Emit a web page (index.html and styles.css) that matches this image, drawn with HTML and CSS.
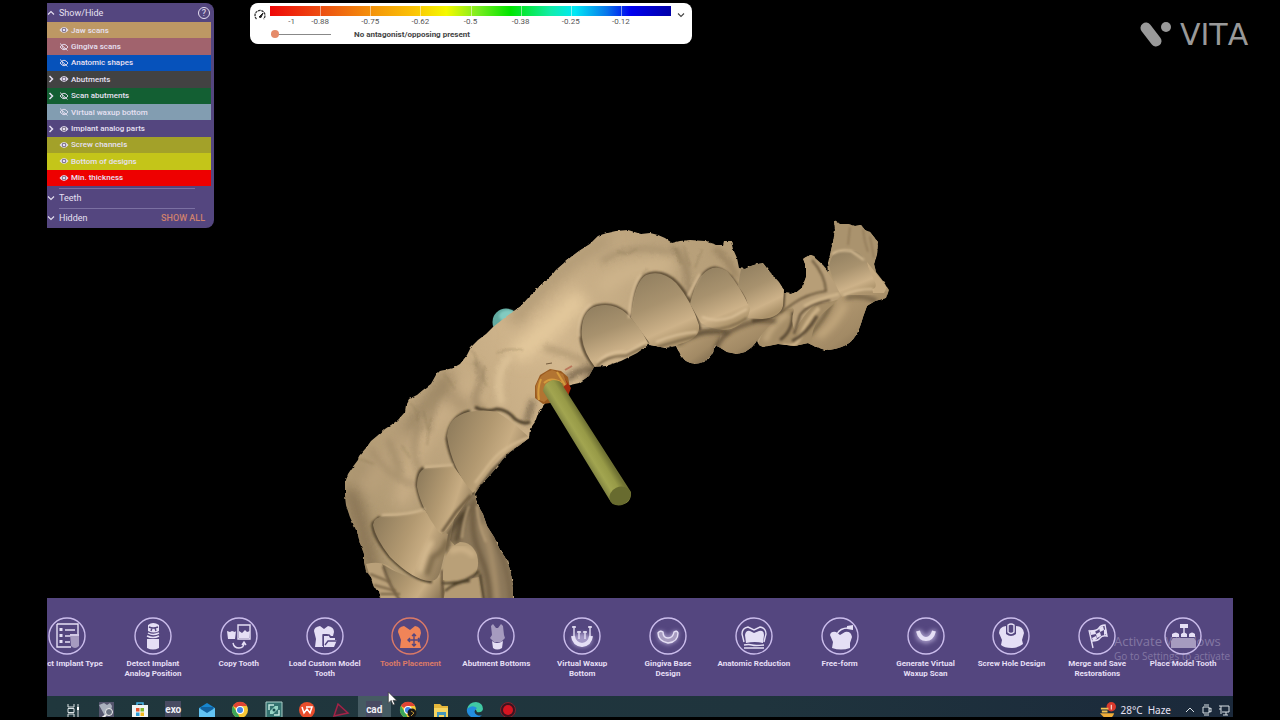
FILE: index.html
```html
<!DOCTYPE html>
<html lang="en">
<head>
  <meta charset="UTF-8" />
  <meta name="viewport" content="width=device-width, initial-scale=1.0" />
  <title>Tooth Placement</title>
  <link rel="stylesheet" href="styles.css">
</head>
<body>
  <!-- shared icons -->
  <svg class="sprite" aria-hidden="true">
    <symbol id="eye" viewBox="0 0 20 16">
      <path d="M1 8Q10-4 19 8Q10 20 1 8Z" fill="currentColor"/>
      <circle cx="10" cy="8" r="4.6" fill="#766b84"/>
      <circle cx="10" cy="8" r="2.6" fill="currentColor"/>
    </symbol>
    <symbol id="eye-off" viewBox="0 0 20 16">
      <path d="M2 8Q10-3 18 8Q10 19 2 8Z" fill="none" stroke="currentColor" stroke-width="1.8"/>
      <path d="M7 6a4 4 0 0 0 6 5M2 1l15 14" fill="none" stroke="currentColor" stroke-width="1.8"/>
    </symbol>
    <symbol id="right" viewBox="0 0 8 8"><path d="M2.5 1l3 3-3 3" fill="none" stroke="currentColor" stroke-width="1.5"/></symbol>
    <symbol id="down" viewBox="0 0 8 8"><path d="M1 2.5l3 3 3-3" fill="none" stroke="currentColor" stroke-width="1.1"/></symbol>
    <symbol id="up" viewBox="0 0 8 8"><path d="M1 5.5l3-3 3 3" fill="none" stroke="currentColor" stroke-width="1.1"/></symbol>
  </svg>

  <div class="screen">
    <main class="viewport">
      <!-- jaw scan -->
      <svg class="model" viewBox="47 3 1186 595" role="img" aria-label="Jaw scan">
        <defs>
          <linearGradient id="jawFill" x1="345" y1="560" x2="890" y2="250" gradientUnits="userSpaceOnUse">
            <stop offset="0" stop-color="#ab956f"/>
            <stop offset=".25" stop-color="#bfa67f"/>
            <stop offset=".45" stop-color="#d2b78e"/>
            <stop offset=".7" stop-color="#b9a17b"/>
            <stop offset="1" stop-color="#ad956d"/>
          </linearGradient>
          <linearGradient id="tooth" x1=".1" y1="0" x2=".5" y2="1">
            <stop offset="0" stop-color="#907e5f"/>
            <stop offset=".45" stop-color="#a8926e"/>
            <stop offset=".8" stop-color="#cdb289"/>
            <stop offset="1" stop-color="#ab926a"/>
          </linearGradient>
          <linearGradient id="toothLeft" x1="0" y1=".2" x2="1" y2=".6">
            <stop offset="0" stop-color="#8f7c5c"/>
            <stop offset=".45" stop-color="#b29971"/>
            <stop offset=".7" stop-color="#c8ad83"/>
            <stop offset="1" stop-color="#907b5a"/>
          </linearGradient>
          <linearGradient id="back" x1="0" y1="0" x2="1" y2="1">
            <stop offset="0" stop-color="#bfa47b"/>
            <stop offset=".6" stop-color="#a28a65"/>
            <stop offset="1" stop-color="#6a593f"/>
          </linearGradient>
          <linearGradient id="rod" x1="578" y1="450" x2="596" y2="439" gradientUnits="userSpaceOnUse">
            <stop offset="0" stop-color="#7d8040"/>
            <stop offset=".35" stop-color="#a2a550"/>
            <stop offset=".7" stop-color="#979a47"/>
            <stop offset="1" stop-color="#707233"/>
          </linearGradient>
          <filter id="soft1"><feGaussianBlur stdDeviation="1"/></filter>
          <filter id="soft2" x="-30%" y="-30%" width="160%" height="160%"><feGaussianBlur stdDeviation="2"/></filter>
          <filter id="soft3" x="-30%" y="-30%" width="160%" height="160%"><feGaussianBlur stdDeviation="3"/></filter>
          <filter id="soft7" x="-40%" y="-40%" width="180%" height="180%"><feGaussianBlur stdDeviation="7"/></filter>
          <filter id="rough" x="-5%" y="-5%" width="110%" height="110%">
            <feTurbulence type="fractalNoise" baseFrequency=".2" numOctaves="2" seed="4"/>
            <feDisplacementMap in="SourceGraphic" scale="3" xChannelSelector="R" yChannelSelector="G"/>
          </filter>
          <path id="jaw" d="M381 598L379 591 374 587 371 577 366 571 364 562 364 554 360 543 357 532 350 517 346 505 345 495 345 483 348 474 352 468 358 460 359 456 366 448 371 441 377 436 385 429 391 425 398 420 405 412 406 405 409 399 417 395 423 390 431 384 436 375 440 371 445 370 453 368 460 364 467 355 471 347 478 340 486 334 493 327 507 316 521 306 530 296 541 285 552 275 556 270 571 257 579 251 590 244 598 236 607 233 616 231 628 230 641 234 650 233 658 235 665 238 672 243 680 241 690 240 705 241 710 243 717 245 723 245 724 241 731 241 733 249 737 258 739 268 745 269 751 266 757 264 763 263 770 272 779 282 784 290 784 293 791 294 797 292 803 287 806 277 806 266 803 259 809 255 814 257 823 265 829 272 828 263 833 242 835 230 834 221 840 224 848 224 855 226 861 225 865 230 870 232 874 237 878 242 877 255 874 264 876 272 883 281 889 290 886 298 875 301 867 306 863 317Q857 340 846 345 836 350 825 350L814 346 808 343 795 346 778 344 763 347 759 345 757 341 752 347 745 352 737 354 727 352 719 347 715 345Q713 357 703 362 694 366 686 361 681 357 676 346L665 348 655 346 648 345 637 353 621 361 606 366 594 367 589 376 579 383 570 385 559 389 547 401 539 411 535 422 530 429 529 438 520 445 510 452 503 459 497 467 490 475 480 486 475 494 477 504 483 514 487 526 494 537 500 550 507 560 511 573 513 585 513 602H381Z"/>
          <clipPath id="jawClip"><use href="#jaw"/></clipPath>
        </defs>

        <circle cx="506" cy="322" r="13.500" fill="#62aaa0"/>
        <ellipse cx="508" cy="316" rx="9" ry="6" fill="#82cbc0" filter="url(#soft1)"/>

        <g filter="url(#rough)">
        <use href="#jaw" fill="url(#jawFill)"/>
        <g clip-path="url(#jawClip)">
          <!-- broad gum shading -->
          <g fill="none" filter="url(#soft7)">
            <path d="M377 600Q367 535 349 487" stroke="#806c4e" stroke-width="13"/>
            <path d="M358 478Q415 430 449 372" stroke="#958160" stroke-width="13"/>
            <path d="M512 322Q560 262 610 238" stroke="#b19a75" stroke-width="15"/>
            <path d="M401 505Q420 420 475 382" stroke="#ccb189" stroke-width="13"/>
            <path d="M515 356Q550 330 582 296" stroke="#e4c99c" stroke-width="20"/>
            <path d="M600 290Q625 265 674 265" stroke="#cfb58c" stroke-width="16"/>
            <path d="M365 490Q380 460 412 435" stroke="#b9a07a" stroke-width="20"/>
            <path d="M440 370L454 400 470 409" stroke="#a18a66" stroke-width="10"/>
          </g>
          <g fill="none" filter="url(#soft3)">
            <path d="M601 262Q630 242 670 252" stroke="#a38d6a" stroke-width="4"/>
            <path d="M672 247Q690 258 688 296" stroke="#95805e" stroke-width="5"/>
            <path d="M714 248Q728 258 737 278" stroke="#937d5b" stroke-width="5"/>
            <path d="M474 362Q486 372 478 389T485 410" stroke="#9b8563" stroke-width="5"/>
            <path d="M510 355Q493 375 502 404" stroke="#e4ca9f" stroke-width="5"/>
            <path d="M370 448Q390 480 414 484" stroke="#a38c69" stroke-width="4"/>
            <path d="M420 423Q408 452 422 476M448 381Q427 405 430 432M388 439L401 474" stroke="#9f8966" stroke-width="4"/>
            <path d="M544 348Q568 352 592 366" stroke="#ae9671" stroke-width="5"/>
            <path d="M566 380Q580 367 596 369L584 385" stroke="#5d4e39" stroke-width="5"/>
            <path d="M533 400L526 424" stroke="#5d4e39" stroke-width="4"/>
          </g>
          <g fill="none" stroke="#84724f" stroke-width="1" opacity=".6" filter="url(#soft1)">
            <path d="M471 350Q478 356 476 367M485 367Q480 379 487 386M497 353Q505 348 523 350M410 403Q420 412 417 421M360 459L374 464M444 374L455 389M617 251L627 254 637 249M640 276L648 269M675 247L681 264M684 247L690 266M702 249L695 268M424 412L428 430M431 418L427 445M402 446L410 458"/>
          </g>
        </g>
        </g>

        <g clip-path="url(#jawClip)">
          <!-- inner side below the left teeth -->
          <path d="M474 492L481 510 496 538 510 566 515 602H475L468 560 450 540 455 515Z" fill="#8c785a"/>
          <g fill="none" filter="url(#soft2)">
            <path d="M474 500Q469 530 480 555T490 602" stroke="#6a583e" stroke-width="4"/>
            <path d="M482 524Q493 550 497 600" stroke="#a58d69" stroke-width="6"/>
            <path d="M492 535Q509 563 511 602" stroke="#786548" stroke-width="4"/>
            <path d="M468 506Q461 522 456 542M463 512L449 534 446 552" stroke="#4d3f2b" stroke-width="4"/>
          </g>
          <path d="M469 506Q463 522 462 538M477 506Q478 524 486 542" fill="none" stroke="#b69d77" stroke-width="2" filter="url(#soft1)"/>

          <!-- far teeth on the right -->
          <path d="M834 218L829 262Q845 242 875 274L882 240 865 222Z" fill="#aa936e"/>
          <path d="M863 229Q864 241 868 252M850 227L848 245M870 236L874 258" fill="none" stroke="#80694a" stroke-width="1" filter="url(#soft1)"/>
          <path d="M842 295Q857 287 877 290L891 292 886 299 868 305 860 329Q848 352 825 352 812 347 806 343Q814 331 829 308Z" fill="url(#back)"/>
          <path d="M845 304Q835 325 818 337" fill="none" stroke="#c2a77d" stroke-width="7" filter="url(#soft3)"/>
          <path d="M832 302Q824 320 808 336" fill="none" stroke="#58482f" stroke-width="3" filter="url(#soft2)"/>
          <path d="M846 298Q860 294 877 301" fill="none" stroke="#5d4d36" stroke-width="3" filter="url(#soft2)"/>
          <path d="M784 310Q760 328 757 350L812 348Q809 334 820 316L838 300Z" fill="#a58d67"/>
          <path d="M819 308Q807 320 801 335T783 345" fill="none" stroke="#cbb086" stroke-width="4" filter="url(#soft1)"/>
          <path d="M765 341Q772 324 788 314" fill="none" stroke="#bea47b" stroke-width="6" filter="url(#soft2)"/>
          <path d="M793 312Q793 331 780 340M817 316Q807 334 792 341" fill="none" stroke="#5b4b34" stroke-width="3" filter="url(#soft1)"/>
          <path d="M784 293Q800 291 806 275L803 257Q815 256 824 268 834 280 842 295 836 303 820 303 807 308 795 331 790 322 794 310 785 308Z" fill="#b89f79"/>
          <path d="M804 257Q814 263 820 273L825 290Q806 292 783 310L784 292Q800 291 806 275Z" fill="#b79e77"/>
          <path d="M812 260Q825 275 826 291 807 294 794 303L780 313" fill="none" stroke="#6d5a3e" stroke-width="2" filter="url(#soft1)"/>
          <path d="M830 300Q808 304 800 315L794 334" fill="none" stroke="#5d4c34" stroke-width="2" filter="url(#soft1)"/>
          <path d="M839 294Q816 299 804 306" fill="none" stroke="#cfb58b" stroke-width="3" filter="url(#soft1)"/>
          <path d="M867 262L887 287 884 293 873 293Z" fill="#c5aa81"/>
          <path d="M829 266Q832 251 841 251 857 247 864 258L875 282Q878 289 870 290 855 291 842 297 832 280 829 266Z" fill="url(#tooth)"/>
          <path d="M832 254Q840 249 851 251L864 260M843 295Q856 289 873 289" fill="none" stroke="#dac097" stroke-width="2" filter="url(#soft1)"/>

          <!-- cusps under the front teeth -->
          <path d="M676 346Q686 337 700 329H722L716 354Q699 372 680 358Z" fill="url(#back)"/>
          <path d="M718 331L752 319 776 319Q762 332 755 345 737 363 715 349L722 336Z" fill="url(#back)"/>
          <path d="M677 344Q698 328 728 332" fill="none" stroke="#4d3f2b" stroke-width="4" filter="url(#soft2)"/>
          <path d="M716 350Q720 330 757 321L776 321" fill="none" stroke="#4f402c" stroke-width="3" filter="url(#soft2)"/>

          <!-- front teeth -->
          <g fill="none" stroke="#54452f" stroke-width="3" filter="url(#soft1)">
            <path d="M595 367Q580 350 581 331 584 310 597 306 613 302 626 313T649 343"/>
            <path d="M633 316Q634 279 649 274 665 270 678 284T700 330"/>
            <path d="M692 301Q700 269 715 268 727 270 735 283T750 308"/>
            <path d="M784 289L783 306Q778 319 752 321"/>
          </g>
          <path d="M741 269Q753 263 763 264L784 289 783 306Q780 318 761 319L748 318Q751 300 738 286Z" fill="url(#tooth)"/>
          <path d="M690 304Q694 286 701 276 713 262 727 271 740 286 750 308 749 322 731 329 716 332 701 323Z" fill="url(#tooth)"/>
          <path d="M631 318Q634 282 646 275 661 269 676 283 692 302 699 325 701 338 680 344 666 350 651 345Z" fill="url(#tooth)"/>
          <path d="M582 337Q580 310 597 306 613 302 626 313 639 325 648 343 640 352 620 356 606 359 595 367 584 353 582 337Z" fill="url(#tooth)"/>
          <g fill="none" stroke="#dbc199" stroke-width="2" filter="url(#soft1)">
            <path d="M597 363Q608 350 627 352L646 342M656 342Q677 333 697 332M702 317Q716 323 732 317L747 309"/>
            <path d="M579 337Q577 312 591 304M629 318Q631 288 641 274M688 296L700 274"/>
          </g>
          <path d="M597 366Q608 355 626 356L646 346M657 347Q677 341 697 336M709 330Q731 329 747 318" fill="none" stroke="#7b6748" stroke-width="2" filter="url(#soft1)"/>

          <!-- left teeth -->
          <path d="M366 564Q383 560 393 569L436 602H378Z" fill="#b9a079"/>
          <path d="M382 564Q400 576 430 583L442 576 446 602H402Q390 586 382 564Z" fill="url(#toothLeft)"/>
          <path d="M383 566Q389 586 401 602M442 570L443 602" fill="none" stroke="#5d4c34" stroke-width="2" filter="url(#soft1)"/>
          <path d="M370 574L390 582M374 585L396 591M380 594H400" fill="none" stroke="#776345" stroke-width="2" filter="url(#soft1)"/>
          <path d="M445 592Q452 580 479 577L484 602H443Z" fill="#b39a73"/>
          <path d="M443 573Q444 549 460 542 472 542 477 555 481 571 470 579 457 584 443 580Z" fill="#b9a078"/>
          <path d="M450 552Q463 544 474 556" fill="none" stroke="#cdb288" stroke-width="5" filter="url(#soft2)"/>
          <path d="M442 583Q465 585 479 571M445 591Q455 582 470 581M480 574L484 602" fill="none" stroke="#4a3c28" stroke-width="2" filter="url(#soft1)"/>

          <g fill="none" stroke="#4d3f2a" stroke-width="3" filter="url(#soft1)">
            <path d="M474 494Q451 466 447 439 450 416 470 411"/>
            <path d="M441 534Q421 510 417 485 418 470 424 468"/>
            <path d="M432 582Q413 580 390 557 371 534 373 523L380 517"/>
            <path d="M475 407Q485 413 497 409 508 410 515 419 524 425 530 422"/>
          </g>
          <path d="M373 525Q373 517 385 516 410 516 425 510L440 531 448 534 445 552 441 569Q438 582 430 581 413 580 390 557 376 539 373 525Z" fill="url(#toothLeft)"/>
          <path d="M432 541Q424 553 420 572" fill="none" stroke="#d6bb91" stroke-width="5" filter="url(#soft2)"/>
          <path d="M447 540Q444 552 433 557L427 575" fill="none" stroke="#7d694a" stroke-width="5" filter="url(#soft2)"/>
          <path d="M417 487Q417 467 430 468L453 466 473 492 463 507 448 528Q442 537 438 531 421 508 417 487Z" fill="url(#toothLeft)"/>
          <path d="M447 436Q448 417 468 412 484 409 497 412 513 422 530 438L508 453Q493 462 487 474L473 493Q452 470 447 436Z" fill="url(#toothLeft)"/>
          <g fill="none" filter="url(#soft1)">
            <path d="M530 437Q502 447 491 462L475 483" stroke="#d6bb91" stroke-width="2"/>
            <path d="M529 441L507 456 493 470 477 491" stroke="#5f4f38" stroke-width="3"/>
            <path d="M471 495L456 512 442 532" stroke="#6e5b3f" stroke-width="3"/>
            <path d="M424 467L453 465M382 515Q410 515 425 509" stroke="#d2b88f" stroke-width="2"/>
          </g>
        </g>

        <!-- implant position and screw channel -->
        <path d="M540 375L550 369 561 371 568 377 570 388 565 401 543 404 535 398 535 386Z" fill="#9a5b20"/>
        <path d="M565 379L571 388 568 396 560 391Z" fill="#a52d0d"/>
        <path d="M536 386Q540 373 552 370L563 374 567 384 558 391 544 402 537 399Z" fill="#b27432"/>
        <path d="M541 379Q537 389 539 400M557 372L565 385M544 383Q551 376 562 383" fill="none" stroke="#d59b3d" stroke-width="2"/>
        <path d="M543 391Q544 382 553 380 562 380 563 386L631 492Q632 504 619 505 612 505 609 499Z" fill="url(#rod)"/>
        <ellipse cx="620" cy="496" rx="11" ry="9" transform="rotate(-25 620 496)" fill="#686b2f"/>
        <path d="M546 364L552 363" stroke="#745b3e"/>
        <path d="M565 370L572 366" stroke="#ba765b" stroke-width="2"/>
      </svg>

      <section class="panel">
        <div class="panel-head">
          <button class="group-button"><svg class="chevron"><use href="#up"/></svg>Show/Hide</button>
          <button class="help-button" aria-label="Help">?</button>
        </div>
        <ul class="layers">
          <li><button class="layer jaw"><i></i><svg class="eye"><use href="#eye"/></svg>Jaw scans</button></li>
          <li><button class="layer gingiva"><i></i><svg class="eye"><use href="#eye-off"/></svg>Gingiva scans</button></li>
          <li><button class="layer anatomic"><i></i><svg class="eye"><use href="#eye-off"/></svg>Anatomic shapes</button></li>
          <li><button class="layer abutments"><svg class="chevron"><use href="#right"/></svg><svg class="eye"><use href="#eye"/></svg>Abutments</button></li>
          <li><button class="layer scan"><svg class="chevron"><use href="#right"/></svg><svg class="eye"><use href="#eye-off"/></svg>Scan abutments</button></li>
          <li><button class="layer waxup"><i></i><svg class="eye"><use href="#eye-off"/></svg>Virtual waxup bottom</button></li>
          <li><button class="layer implant"><svg class="chevron"><use href="#right"/></svg><svg class="eye"><use href="#eye"/></svg>Implant analog parts</button></li>
          <li><button class="layer screw"><i></i><svg class="eye"><use href="#eye"/></svg>Screw channels</button></li>
          <li><button class="layer bottom"><i></i><svg class="eye"><use href="#eye"/></svg>Bottom of designs</button></li>
          <li><button class="layer thickness"><i></i><svg class="eye"><use href="#eye"/></svg>Min. thickness</button></li>
        </ul>
        <div class="panel-group">
          <button class="group-button"><svg class="chevron"><use href="#down"/></svg>Teeth</button>
        </div>
        <div class="panel-group">
          <button class="group-button"><svg class="chevron"><use href="#down"/></svg>Hidden</button>
          <button class="show-all">SHOW ALL</button>
        </div>
      </section>

      <section class="legend">
        <svg class="gauge" viewBox="0 0 12 12"><path d="M2.500 10A5 5 0 1 1 9.500 10" fill="none" stroke="#333" stroke-width="1.300" stroke-dasharray="2.500 .7"/><path d="M5 8L9 4 7 8.500Z" fill="#222" stroke="#222"/></svg>
        <div class="scale">
          <div class="scale-bar"><i></i><i></i><i></i><i></i><i></i><i></i><i></i><i></i></div>
          <div class="scale-labels">
            <span>-1</span><span>-0.88</span><span>-0.75</span><span>-0.62</span><span>-0.5</span><span>-0.38</span><span>-0.25</span><span>-0.12</span>
          </div>
          <div class="scale-foot">
            <input type="range" min="0" max="100" value="0" aria-label="Distance">
            <span>No antagonist/opposing present</span>
          </div>
        </div>
        <button class="legend-toggle" aria-label="Expand"><svg class="chevron"><use href="#down"/></svg></button>
      </section>
    </main>

    <nav class="toolbar">
      <div class="watermark"><p>Activate Windows</p><p>Go to Settings to activate Windows.</p></div>
      <div class="steps">
        <button class="step">
          <svg viewBox="0 0 38 38"><circle cx="19" cy="19" r="18"/><path d="M9 7h21v20M23 30H9V7M17 13h10M17 19h7M17 25h5" /><path class="solid" d="M11.500 11h3v3h-3zM11.500 17h3v3h-3zM11.500 23h3v3h-3z"/><path class="dim" d="M22 17h9v12q-4 4-8 0z"/><path d="M22 18h9"/></svg>
          <span>Select Implant Type</span>
        </button>
        <button class="step">
          <svg viewBox="0 0 38 38"><circle cx="19" cy="19" r="18"/><path class="solid" d="M13 22h12v9q-6 3-12 0zM14 8q5-4 11 0v6q-5 3-11 0z"/><path d="M14 16q5 3 11 0M13 19q6 3 12 0"/><path class="cut" d="M15 10q4 2 9 0M17 14l1-3h3l1 3"/></svg>
          <span>Detect Implant<br>Analog Position</span>
        </button>
        <button class="step">
          <svg viewBox="0 0 38 38"><circle cx="19" cy="19" r="18"/><path d="M18 8h12v14H18z"/><path class="solid" d="M7 14l3 1 2-1 3 1 1-1-1 8H8zM19 14l3 2 3-3 2 2 3-1-1 7H19z"/><path d="M13 26q1 5 6 5 5 0 5-5M22 28l2-3 2 3"/></svg>
          <span>Copy Tooth</span>
        </button>
        <button class="step">
          <svg viewBox="0 0 38 38"><circle cx="19" cy="19" r="18"/><path class="solid" d="M8 14q0-4 6-5l4 3 4-3q6 1 6 6l-1 4h-4l-2-2h-4v13H9l1-8z"/><path class="solid" d="M18 19h5l1 2h5v2h2l-3 7H18z"/><path class="cut" d="M17 29V18h6l2 2M19 28l3-4h9"/></svg>
          <span>Load Custom Model<br>Tooth</span>
        </button>
        <button class="step active">
          <svg viewBox="0 0 38 38"><circle cx="19" cy="19" r="18"/><path class="solid" d="M7 15q0-5 6-6l6 4 5-4q6 1 6 7l-2 7 2 8H9l1-8z"/><path class="cut" d="M23 17v12M17 23h12M21 19l2-2 2 2M21 27l2 2 2-2M19 21l-2 2 2 2M27 21l2 2-2 2"/></svg>
          <span>Tooth Placement</span>
        </button>
        <button class="step">
          <svg viewBox="0 0 38 38"><circle cx="19" cy="19" r="18"/><path class="dim" d="M14 9l2-2 3 4h2l3-4 2 2 1 9 1 3-4 4h-7l-4-4 2-3z"/><path class="solid" d="M15 24q2 2 5 2t6-2l-1 7q-5 3-9 0z"/></svg>
          <span>Abutment Bottoms</span>
        </button>
        <button class="step">
          <svg viewBox="0 0 38 38"><circle cx="19" cy="19" r="18"/><ellipse class="glow" cx="19" cy="23" rx="10" ry="7"/><path class="thick" d="M10 19q1 8 9 9 8-1 9-9"/><path d="M11 9v13M16 14v8M22 14v8M27 9v13M9 10h4M14 15h4M20 15h4M25 10h4"/></svg>
          <span>Virtual Waxup<br>Bottom</span>
        </button>
        <button class="step">
          <svg viewBox="0 0 38 38"><circle cx="19" cy="19" r="18"/><path class="glow" d="M8 14h6l5 6 5-6h6l-2 10-9 4-9-4z"/><path class="dim" d="M9 16q2-3 5-1 0 6 5 6t6-6q3-2 4 1 0 9-10 10Q9 24 9 16Z"/><path d="M9 16q2-3 5-1 0 6 5 6t6-6q3-2 4 1 0 9-10 10Q9 24 9 16Z"/></svg>
          <span>Gingiva Base<br>Design</span>
        </button>
        <button class="step">
          <svg viewBox="0 0 38 38"><circle cx="19" cy="19" r="18"/><path class="solid" d="M10 18q1-5 5-4l4 2 5-2q5-1 5 4l-1 8q-8-2-17 0z"/><path d="M9 25l-2-8q0-6 6-7l6 3 6-3q6 1 6 7l-2 8M9 28q5-1 8 0t12 0M9 31h20"/></svg>
          <span>Anatomic Reduction</span>
        </button>
        <button class="step">
          <svg viewBox="0 0 38 38"><circle cx="19" cy="19" r="18"/><path class="solid" d="M9 18q1-4 6-3l4 3 5-3q6-1 7 5l-2 6v5q-9 3-18 0l1-6z"/><path d="M16 17q3-6 11-6"/><path class="solid" d="M26 9l6-1v5l-6-1z"/></svg>
          <span>Free-form</span>
        </button>
        <button class="step">
          <svg viewBox="0 0 38 38"><circle cx="19" cy="19" r="18"/><path class="glow" d="M8 13h6l5 6 5-6h6l-2 10-9 4-9-4z"/><path class="thick" d="M11 14q2 8 8 8t8-8"/></svg>
          <span>Generate Virtual<br>Waxup Scan</span>
        </button>
        <button class="step">
          <svg viewBox="0 0 38 38"><circle cx="19" cy="19" r="18"/><path class="solid" d="M7 16q0-6 7-7v8q5 4 10 0V9q7 0 8 7l-2 7 1 4q-5 4-11 4-8 0-11-3l1-5z"/><path d="M16 8v7q3 3 6 0V8q-3-2-6 0Z"/></svg>
          <span>Screw Hole Design</span>
        </button>
        <button class="step">
          <svg viewBox="0 0 38 38"><circle cx="19" cy="19" r="18"/><path d="M11 13l4 18M12 14q7 0 9-3t6-3l2 11q-5-1-7 2t-8 3"/><path class="solid" d="M12 14l5-1 1 4-5 1zM21 11l4-2 1 4-4 2zM18 17l4-2 1 4-4 2zM26 13l2-1 1 5-3 1zM14 21l4-2 1 3-4 2z"/></svg>
          <span>Merge and Save<br>Restorations</span>
        </button>
        <button class="step">
          <svg viewBox="0 0 38 38"><circle cx="19" cy="19" r="18"/><path class="solid" d="M16 7h8v4h-8zM8 17q4-3 7 0v3H8zM17 17q3-3 6 0v3h-6zM25 17q3-3 6 0v3h-6z"/><path d="M20 11v5"/><path class="dim" d="M9 21h21l2 3v7H7v-7z"/></svg>
          <span>Place Model Tooth</span>
        </button>
      </div>
      <svg class="cursor" viewBox="0 0 12 16"><path d="M1 1v12l3-3 2 5 2-1-2-4h4Z" fill="#fff" stroke="#333" stroke-width=".7"/></svg>
    </nav>

    <footer class="taskbar">
      <div class="apps">
        <button aria-label="Task view"><svg viewBox="0 0 18 18"><path d="M4 3v3h6V3M4 16v-3h6v3M4 7.500h6v4H4zM14 3v13" fill="none" stroke="#dce3e5"/><path d="M13 6h2v3h-2z" fill="#fff"/></svg></button>
        <button aria-label="Scan viewer"><svg viewBox="0 0 18 18"><path d="M2 1h15v16H2z" fill="#54556d"/><path d="M2 4l5-2 3 2 3-2 2 3-2 9-5 1z" fill="#aab1bd"/><circle cx="12" cy="11" r="3.500" fill="#697180" stroke="#eee"/><path d="M9 14l-4 3" stroke="#eee" stroke-width="2"/></svg></button>
        <button aria-label="Store"><svg viewBox="0 0 18 18"><path d="M6 5V2h6v3" fill="none" stroke="#48b6e8" stroke-width="1.500"/><path d="M1 4h16v14H1z" fill="#f1f5f5"/><path d="M5 7h3.500v3.500H5z" fill="#e6532d"/><path d="M9.500 7H13v3.500H9.500z" fill="#7fb52b"/><path d="M5 11.500h3.500V15H5z" fill="#2d9fd9"/><path d="M9.500 11.500H13V15H9.500z" fill="#f4b91d"/></svg></button>
        <button class="text-app">exo</button>
        <button aria-label="Mail"><svg viewBox="0 0 18 18"><path d="M1 7l8-5 8 5v10H1z" fill="#1786cf"/><path d="M3 6h12v6H3z" fill="#12629f"/><path d="M1 7l8 5 8-5v10H1z" fill="#63c3f2"/></svg></button>
        <button aria-label="Chrome"><svg viewBox="0 0 18 18"><circle cx="9" cy="9" r="8" fill="#f6c736"/><path d="M9 9L2 5a8 8 0 0 1 14 0H9Z" fill="#e04435"/><path d="M2 5l5 8 2 4A8 8 0 0 1 2 5Z" fill="#3ca65a"/><circle cx="9" cy="9" r="4" fill="#fff"/><circle cx="9" cy="9" r="3" fill="#4084e6"/></svg></button>
        <button aria-label="Sync"><svg viewBox="0 0 18 18"><path d="M1 1h16v16H1z" fill="#33716f" stroke="#a9cdc7"/><path d="M4 9V4h5M14 9v5H9" fill="none" stroke="#c3e8df" stroke-width="1.500"/><path d="M5 10l5-5h3v3l-5 5H5z" fill="#95d4c4"/><circle cx="9" cy="9" r="1.500" fill="#1b4d50"/></svg></button>
        <button aria-label="WPS Office"><svg viewBox="0 0 18 18"><circle cx="9" cy="9" r="8" fill="#e94d2c"/><path d="M4 6l2 6 3-4 3 4 2-6H8" fill="none" stroke="#fff" stroke-width="1.500"/></svg></button>
        <button aria-label="Media player"><svg viewBox="0 0 18 18"><path d="M6 3l10 9-14 3Z" fill="#3b2939" stroke="#a42347" stroke-width="1.500"/></svg></button>
        <button class="text-app current">cad</button>
        <button aria-label="Chrome profile"><svg viewBox="0 0 18 18"><circle cx="9" cy="9" r="8" fill="#f6c736"/><path d="M9 9L2 5a8 8 0 0 1 14 0H9Z" fill="#e04435"/><path d="M2 5l5 8 2 4A8 8 0 0 1 2 5Z" fill="#3ca65a"/><circle cx="9" cy="9" r="4" fill="#fff"/><circle cx="9" cy="9" r="3" fill="#4084e6"/><circle cx="13" cy="12" r="4.500" fill="#181716"/><path d="M12 10l3 2-3 3" fill="none" stroke="#b99131"/></svg></button>
        <button aria-label="File Explorer"><svg viewBox="0 0 18 18"><path d="M2 3h6l2 2h6v13H2z" fill="#e5b73b"/><path d="M2 7h14v11H2z" fill="#f7d661"/><path d="M5 11h9v7h-2v-4H7v4H5z" fill="#4597ba"/></svg></button>
        <button aria-label="Edge"><svg viewBox="0 0 18 18"><path d="M1 8Q3 1 10 1q7 1 7 7-1 4-6 3-2-6-10-3Z" fill="#40c9a4"/><path d="M1 8q5-5 10-1-5 4 0 7 3 1 5 0-5 5-11 2Q0 13 1 8Z" fill="#228dde"/></svg></button>
        <button aria-label="Recorder"><svg viewBox="0 0 18 18"><circle cx="9" cy="9" r="7.500" fill="#3c1420" stroke="#83242e"/><circle cx="9" cy="9" r="5" fill="#d61521"/></svg></button>
      </div>
      <div class="tray">
        <svg class="weather" viewBox="0 0 18 18"><circle cx="13" cy="5" r="5" fill="#d93a2d"/><path d="M2 7h8M3 10h6" stroke="#f5c351" stroke-width="2"/><path d="M1 12h15q-1 5-6 5H6Z" fill="#efad38"/><path d="M13 3v5" stroke="#fff"/></svg>
        <span>28°C</span><span>Haze</span>
        <svg class="tray-icon" viewBox="0 0 12 12"><path d="M2 8l4-4 4 4" fill="none" stroke="#d9e0e5"/></svg>
        <svg class="tray-icon" viewBox="0 0 12 12"><path d="M3 1h5M3 11h5M2 3h6v6H2zM8 5l2-1v4L8 7" fill="none" stroke="#d9e0e5"/></svg>
        <svg class="tray-icon" viewBox="0 0 12 12"><path d="M3 2h8v6H4M1 2h2v8M1 5h2M5 11h5M8 8v3" fill="none" stroke="#d9e0e5"/></svg>
      </div>
    </footer>
  </div>

  <div class="brand">
    <svg viewBox="0 0 34 28"><path d="M7 7l10 13" stroke="#999" stroke-width="11" stroke-linecap="round"/><circle cx="27" cy="6" r="5" fill="#999"/></svg>
    <span>VITA</span>
  </div>
</body>
</html>
```
FILE: styles.css
```css
* {
  box-sizing: border-box;
}

body {
  margin: 0;
  background: #000;
  font-family: Roboto, "Liberation Sans", sans-serif;
  color: #e6e0f2;
}

button {
  border: none;
  background: none;
  padding: 0;
  margin: 0;
  font: inherit;
  color: inherit;
  cursor: pointer;
}

p,
ul {
  margin: 0;
  padding: 0;
  list-style: none;
}

.sprite {
  position: absolute;
  width: 0;
  height: 0;
}

.screen {
  display: flex;
  flex-direction: column;
  min-height: 100vh;
  padding: 3px 47px;
}

.viewport {
  position: relative;
  flex: 1;
  min-height: 400px;
}

.model {
  position: absolute;
  width: 100%;
  height: 100%;
}

.chevron {
  width: 8px;
  height: 8px;
}

/* layer list */
.panel {
  position: absolute;
  top: 0;
  left: 0;
  width: 167px;
  background: #54467f;
  border-radius: 0 8px 8px 0;
  font-size: 9px;
}

.panel-head,
.panel-group {
  display: flex;
  align-items: center;
  justify-content: space-between;
  height: 20px;
  padding-right: 4px;
}

.panel-head {
  height: 19px;
}

.group-button {
  display: flex;
  align-items: center;
  gap: 4px;
}

.help-button {
  width: 12px;
  height: 12px;
  border: 1px solid #e6e0f2;
  border-radius: 50%;
  line-height: 10px;
}

.layers {
  display: grid;
  grid-template-rows: repeat(10, 1fr);
  height: 164px;
  margin: 0 3px 2px 0;
  font-size: 8px;
  font-weight: 500;
}

.layer {
  display: grid;
  grid-template-columns: 10px 10px 1fr;
  align-items: center;
  gap: 2px;
  width: 100%;
  height: 100%;
  text-align: left;
}

.eye {
  width: 10px;
  height: 8px;
}

.jaw { background: #bd9864; }
.gingiva { background: #a1636d; }
.anatomic { background: #0652bb; }
.abutments { background: #424242; }
.scan { background: #135f33; }
.waxup { background: #829db1; }
.implant { background: #54467f; }
.screw { background: #a3a129; }
.bottom { background: #c4c519; }
.thickness { background: #ee0000; }

.panel-group::before {
  content: "";
  position: absolute;
  align-self: flex-start;
  left: 12px;
  width: 136px;
  border-top: 1px solid #7b70a2;
}

.show-all {
  padding-right: 5px;
  color: #cf806d;
  font-weight: 500;
}

/* distance legend */
.legend {
  position: absolute;
  top: 0;
  left: 203px;
  display: grid;
  grid-template-columns: 12px 1fr 12px;
  gap: 4px;
  width: 442px;
  height: 41px;
  padding: 3px 5px 0 4px;
  background: #fff;
  border-radius: 8px;
  color: #444;
  font-size: 8px;
}

.gauge {
  width: 12px;
  height: 12px;
  margin-top: 3px;
}

.scale-bar {
  display: grid;
  grid-template-columns: repeat(8, 1fr);
  height: 10px;
  background: linear-gradient(90deg, #ef0808, #ed5512 14%, #f59b0a 27%, #fbc405 36%, #f5fa00 44%, #78ec20 52%, #00e500 60%, #12edaa 70%, #00e9f5 76%, #0875eb 84%, #0000f0 90%, #0000a8);
}

.scale-bar i + i {
  border-left: 1px solid rgba(255, 255, 255, 0.5);
}

.scale-labels {
  display: grid;
  grid-template-columns: 1fr repeat(7, 2fr) 1fr;
  line-height: 12px;
  text-align: center;
  color: #555;
}

.scale-labels span:first-child {
  text-align: right;
}

.scale-foot {
  display: flex;
  align-items: center;
  gap: 23px;
  height: 12px;
  font-weight: 700;
}

.scale-foot input {
  appearance: none;
  width: 60px;
  height: 8px;
  margin: 0 0 0 1px;
  background: linear-gradient(#888, #888) center / 100% 1px no-repeat;
}

.scale-foot input::-webkit-slider-thumb {
  appearance: none;
  width: 8px;
  height: 8px;
  border-radius: 50%;
  background: #e58a68;
}

.legend-toggle {
  align-self: start;
  margin-top: 5px;
}

/* workflow steps */
.toolbar {
  position: relative;
  height: 98px;
  background: #54467f;
}

.steps {
  display: flex;
  justify-content: flex-end;
  height: 100%;
  padding-right: 7px;
  overflow: hidden;
}

.step {
  position: relative;
  display: flex;
  flex: 0 0 calc((100% + 23px) / 14);
  flex-direction: column;
  align-items: center;
  gap: 4px;
  padding-top: 19px;
  color: #e5dff5;
  font-size: 8px;
  font-weight: 700;
  line-height: 10px;
  white-space: nowrap;
}

.step svg {
  width: 38px;
  height: 38px;
  fill: none;
  stroke: #e5dff5;
  stroke-width: 1.4;
}

.step circle {
  stroke: #cbbdec;
}

.step .solid {
  fill: #e5dff5;
  stroke: none;
}

.step .dim {
  fill: #a69bbf;
  stroke: none;
}

.step .glow {
  fill: #a397c5;
  stroke: none;
  filter: blur(2px);
}

.step .thick {
  stroke-width: 4;
}

.step .cut {
  stroke: #54467f;
}

.step.active {
  color: #db7a67;
}

.step.active svg,
.step.active circle {
  stroke: #db7a67;
}

.step.active .solid {
  fill: #f08458;
}

.step.active .cut {
  stroke: #54467f;
}

.watermark {
  position: absolute;
  top: 35px;
  right: 0;
  width: 119px;
  overflow: hidden;
  white-space: nowrap;
  font-family: "Open Sans", sans-serif;
  font-size: 10px;
  line-height: 14px;
  color: #8377a3;
}

.watermark p:first-child {
  font-size: 13px;
  line-height: 16px;
}

.cursor {
  position: absolute;
  left: 340px;
  bottom: -10px;
  z-index: 1;
  width: 12px;
  height: 15px;
}

/* windows taskbar */
.taskbar {
  display: flex;
  justify-content: space-between;
  height: 21px;
  padding: 0 3px 0 9px;
  overflow: hidden;
  background: linear-gradient(90deg, #20373d, #1f343d 60%, #1b293b);
}

.apps {
  display: grid;
  grid-template-columns: repeat(14, 1fr);
  width: 469px;
}

.apps button {
  height: 27px;
}

.apps svg {
  width: 18px;
  height: 18px;
  vertical-align: middle;
}

.apps .text-app {
  font-size: 10px;
  font-weight: 700;
  color: #f0f0f5;
  background: linear-gradient(#484b62, #484b62) center / 16px 17px no-repeat;
}

.apps .current {
  background-color: #465b63;
}

.tray {
  display: flex;
  align-items: center;
  gap: 5px;
  height: 28px;
  font-family: "Noto Sans", sans-serif;
  font-size: 10px;
}

.weather {
  width: 17px;
  height: 17px;
}

.tray-icon {
  width: 12px;
  height: 12px;
}

.tray span + .tray-icon {
  margin-left: 8px;
}

/* logo over the viewport */
.brand {
  position: absolute;
  top: 20px;
  right: 20px;
  display: flex;
  align-items: center;
  gap: 7px;
  width: 121px;
  color: #999;
  font-family: "DejaVu Sans", sans-serif;
  font-size: 30px;
  line-height: 30px;
  font-kerning: none;
}

.brand svg {
  flex: none;
  width: 34px;
  height: 28px;
}
```
